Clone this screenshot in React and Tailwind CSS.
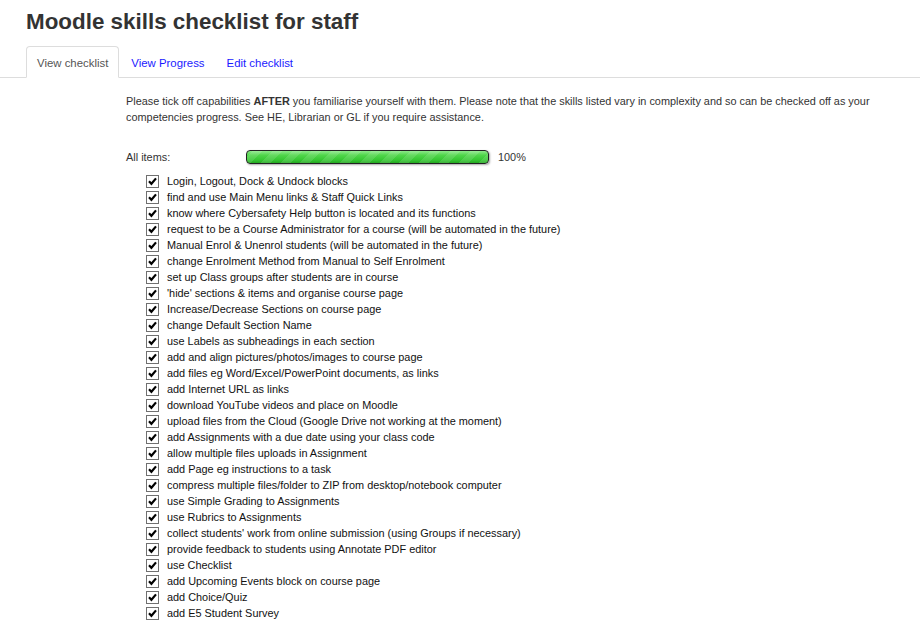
import React from 'react';

const items = [
    'Login, Logout, Dock & Undock blocks',
    'find and use Main Menu links & Staff Quick Links',
    'know where Cybersafety Help button is located and its functions',
    'request to be a Course Administrator for a course (will be automated in the future)',
    'Manual Enrol & Unenrol students (will be automated in the future)',
    'change Enrolment Method from Manual to Self Enrolment',
    'set up Class groups after students are in course',
    "'hide' sections & items and organise course page",
    'Increase/Decrease Sections on course page',
    'change Default Section Name',
    'use Labels as subheadings in each section',
    'add and align pictures/photos/images to course page',
    'add files eg Word/Excel/PowerPoint documents, as links',
    'add Internet URL as links',
    'download YouTube videos and place on Moodle',
    'upload files from the Cloud (Google Drive not working at the moment)',
    'add Assignments with a due date using your class code',
    'allow multiple files uploads in Assignment',
    'add Page eg instructions to a task',
    'compress multiple files/folder to ZIP from desktop/notebook computer',
    'use Simple Grading to Assignments',
    'use Rubrics to Assignments',
    "collect students' work from online submission (using Groups if necessary)",
    'provide feedback to students using Annotate PDF editor',
    'use Checklist',
    'add Upcoming Events block on course page',
    'add Choice/Quiz',
    'add E5 Student Survey',
];

const CheckBox = () => (
    <span className="flex h-[13px] w-[13px] shrink-0 items-center justify-center border border-[#707070] bg-white">
        <svg width="9" height="9" viewBox="0 0 9 9">
            <path d="M1 4.3 L3.4 6.8 L8 1.4" fill="none" stroke="#000" strokeWidth="2.2" />
        </svg>
    </span>
);

export default function App() {
    return (
        <div className="min-h-screen bg-white font-['Liberation_Sans',Arial,sans-serif] text-[#333]">
            {/* Page title */}
            <h1 className="px-[26px] pt-[9px] text-[22.4px] font-bold leading-[26px]">Moodle skills checklist for staff</h1>

            {/* Tabs */}
            <div className="mt-[11px] flex items-end border-b border-[#ddd] pl-[26px] text-[11.4px]">
                <div className="-mb-px mr-[2px] rounded-t-[4px] border border-b-white border-[#ddd] bg-white px-[10px] pb-[7px] pt-[9px] leading-[14px] text-[#555]">
                    View checklist
                </div>
                <a className="pl-[10px] pr-[11px] pb-[7px] pt-[9px] leading-[14px] text-[#1a1aff]">View Progress</a>
                <a className="px-[11px] pb-[7px] pt-[9px] leading-[14px] text-[#1a1aff]">Edit checklist</a>
            </div>

            <div className="pl-[126px] pr-4 text-[10.9px]">
                <p className="mt-[15px] leading-[16px]">
                    Please tick off capabilities <strong>AFTER</strong> you familiarise yourself with them. Please note that the skills listed vary in complexity and so can be checked off as your competencies progress. See HE, Librarian or GL if you require assistance.
                </p>

                {/* Overall progress */}
                <div className="mt-[24px] flex items-center">
                    <span className="w-[120px] leading-[16px]">All items:</span>
                    <div className="h-[14px] w-[243px] overflow-hidden rounded-[4px] border border-[#222] bg-[linear-gradient(to_bottom,#8ee88a_0%,#4fd64a_35%,#36c632_75%,#25a822_100%)] shadow-[1px_1px_2px_rgba(0,0,0,0.35)]">
                        <div className="h-full w-full bg-[repeating-linear-gradient(-45deg,rgba(255,255,255,0.12)_0px,rgba(255,255,255,0.12)_7px,transparent_7px,transparent_14px)]" />
                    </div>
                    <span className="ml-[9px] leading-[16px]">100%</span>
                </div>

                {/* Checklist items */}
                <ul className="mt-[8px] pl-[20px]">
                    {items.map((text, idx) => (
                        <li key={idx} className="flex h-[16px] items-center gap-[8px] text-[#111]">
                            <CheckBox />
                            <span className="leading-[16px]">{text}</span>
                        </li>
                    ))}
                </ul>
            </div>
        </div>
    );
}
